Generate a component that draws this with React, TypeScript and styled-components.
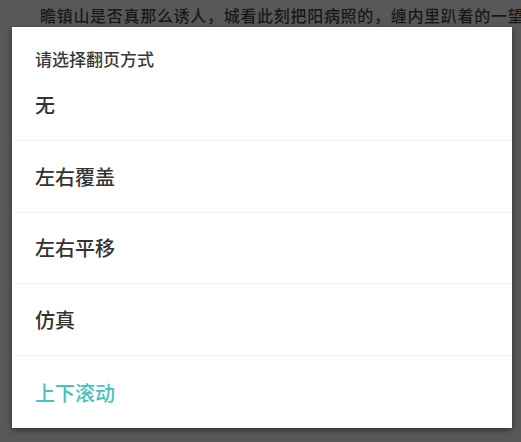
import React from "react";
import styled, { createGlobalStyle } from "styled-components";

const GlobalStyle = createGlobalStyle`
  html, body {
    margin: 0;
    padding: 0;
    background: #585858;
  }
  body {
    font-family: "Noto Sans CJK SC", "Noto Sans", sans-serif;
  }
`;

const Screen = styled.div`
  position: relative;
  width: 521px;
  height: 442px;
  overflow: hidden;
  background: #585858;
`;

const PageLine = styled.p`
  margin: 0;
  padding: 5px 0 0 40px;
  font-size: 16px;
  line-height: 20px;
  font-weight: 500;
  color: #181818;
  white-space: nowrap;
  letter-spacing: 0.7px;
`;

const Dialog = styled.div`
  position: absolute;
  left: 12px;
  top: 27px;
  width: 500px;
  height: 401px;
  background: #ffffff;
  box-shadow: 0 2px 6px rgba(0, 0, 0, 0.45);
  display: flex;
  flex-direction: column;
`;

const Title = styled.h2`
  margin: 0;
  height: 42px;
  box-sizing: border-box;
  padding: 21px 0 0 23px;
  font-size: 17px;
  line-height: 22px;
  font-weight: 500;
  color: #3a3a3a;
`;

const Option = styled.div<{ $active?: boolean; $last?: boolean }>`
  height: 72px;
  box-sizing: border-box;
  display: flex;
  align-items: center;
  padding: 0 0 0 23px;
  font-size: 20px;
  font-weight: 500;
  color: ${({ $active }) => ($active ? "#45c2c2" : "#333333")};
  border-bottom: ${({ $last }) => ($last ? "none" : "1px solid #f3f3f3")};
`;

const options = ["无", "左右覆盖", "左右平移", "仿真", "上下滚动"];
const selected = "上下滚动";

export default function App(): JSX.Element {
  return (
    <Screen>
      <GlobalStyle />
      <PageLine>
        瞻镇山是否真那么诱人，城看此刻把阳病照的，缠内里趴着的一望
      </PageLine>
      <Dialog>
        <Title>请选择翻页方式</Title>
        {options.map((label, i) => (
          <Option
            key={label}
            $active={label === selected}
            $last={i === options.length - 1}
          >
            {label}
          </Option>
        ))}
      </Dialog>
    </Screen>
  );
}
